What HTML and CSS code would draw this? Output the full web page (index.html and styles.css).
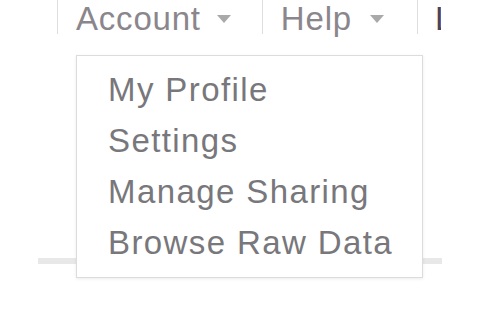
FILE: index.html
```html
<!DOCTYPE html>
<html lang="en">
<head>
    <meta charset="UTF-8">
    <meta name="viewport" content="width=device-width, initial-scale=1.0">
    <title>Account Menu</title>
    <link rel="stylesheet" href="styles.css">
</head>
<body>
    <div class="page">
        <nav class="nav">
            <div class="nav-item account open">
                <span class="nav-label">Account</span>
                <span class="caret"></span>
                <ul class="dropdown">
                    <li>My Profile</li>
                    <li>Settings</li>
                    <li>Manage Sharing</li>
                    <li>Browse Raw Data</li>
                </ul>
            </div>
            <div class="nav-item help">
                <span class="nav-label">Help</span>
                <span class="caret"></span>
            </div>
            <div class="nav-item last">
                <span class="nav-label">Log Out</span>
            </div>
        </nav>

        <div class="content">
            <div class="rule"></div>
        </div>
    </div>
</body>
</html>
```

FILE: styles.css
```css
* {
    box-sizing: border-box;
    margin: 0;
    padding: 0;
}

body {
    background: #fff;
    font-family: 'Liberation Sans', Arial, sans-serif;
}

.page {
    width: 442px;
    height: 320px;
    overflow: hidden;
    padding-left: 38px;
}

.nav {
    display: flex;
    height: 34px;
    margin-left: 19px;
    border-left: 1px solid #dedede;
}

.nav-item {
    position: relative;
    display: flex;
    align-items: flex-start;
    height: 34px;
    padding-left: 18px;
    border-right: 1px solid #dedede;
}

.account {
    padding-right: 31px;
}

.help {
    padding-right: 33px;
}

.nav-item.last {
    width: 23px;
    overflow: hidden;
    border-right: none;
    padding-left: 17px;
}

.nav-label {
    font-size: 33px;
    line-height: normal;
    letter-spacing: 0.8px;
    color: #8a868c;
    white-space: nowrap;
}

.nav-item.last .nav-label {
    color: #4d4258;
    letter-spacing: 0;
}

.caret {
    width: 0;
    height: 0;
    margin-left: 16px;
    margin-top: 15px;
    border-left: 7px solid transparent;
    border-right: 7px solid transparent;
    border-top: 8px solid #a9a9a9;
}

.help .caret {
    margin-left: 18px;
}

.dropdown {
    position: absolute;
    top: 55px;
    left: 18px;
    width: 347px;
    padding: 8px 0 9px 31px;
    list-style: none;
    background: #fff;
    border: 1px solid #dcdcdc;
    box-shadow: 0 1px 3px rgba(0, 0, 0, 0.08);
    z-index: 10;
}

.dropdown li {
    font-size: 33px;
    line-height: 51px;
    letter-spacing: 1.4px;
    color: #78777b;
    white-space: nowrap;
}

.content {
    padding-top: 224px;
}

.rule {
    height: 6px;
    background: #e8e8e8;
}
```
